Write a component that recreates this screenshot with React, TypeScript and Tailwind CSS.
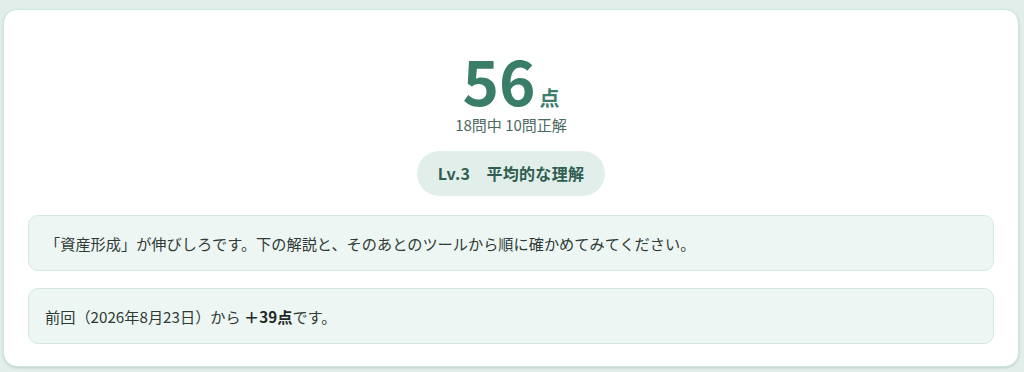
// Result summary card — score, level pill and follow-up notes.

const notes = [
  { id: 'focus', body: <>「資産形成」が伸びしろです。下の解説と、そのあとのツールから順に確かめてみてください。</> },
  {
    id: 'delta',
    body: <>前回（2026年8月23日）から <strong className="font-bold text-[#1f2a26]">＋39点</strong>です。</>,
  },
];

export default function App() {
  return (
    <div
      className="h-[372px] overflow-hidden bg-[#e1eee9] pt-[9px]"
      style={{ fontFamily: '"Noto Sans CJK JP", "Noto Sans", sans-serif' }}
    >
      <section className="ml-[3px] h-[358px] w-[1016px] rounded-[14px] border border-[#cfe4dc] bg-white px-6 pt-[38px] pb-[22px] shadow-sm">
        {/* Score */}
        <div className="flex flex-col items-center">
          <div className="flex items-baseline gap-[4px] text-[#3a7d69]">
            <span className="text-[62px] font-bold leading-none">56</span>
            <span className="text-[20px] font-bold leading-none">点</span>
          </div>
          <p className="mt-[3px] text-[15px] leading-6 text-[#4c6a61]">18問中 10問正解</p>
          <div className="mt-[14px] rounded-full bg-[#e1eeea] px-[21px] py-[10px] text-[16px] font-bold leading-[25px] tracking-[0.3px] text-[#2f5e51]">
            Lv.3　平均的な理解
          </div>
        </div>

        {/* Notes */}
        <div className="mt-[19px] flex flex-col gap-[17px]">
          {notes.map((n) => (
            <div
              key={n.id}
              className="rounded-[10px] border border-[#d4e8e1] bg-[#eef6f3] px-4 py-[15px] text-[15.2px] leading-6 text-[#2e3a36]"
            >
              {n.body}
            </div>
          ))}
        </div>
      </section>
    </div>
  );
}
